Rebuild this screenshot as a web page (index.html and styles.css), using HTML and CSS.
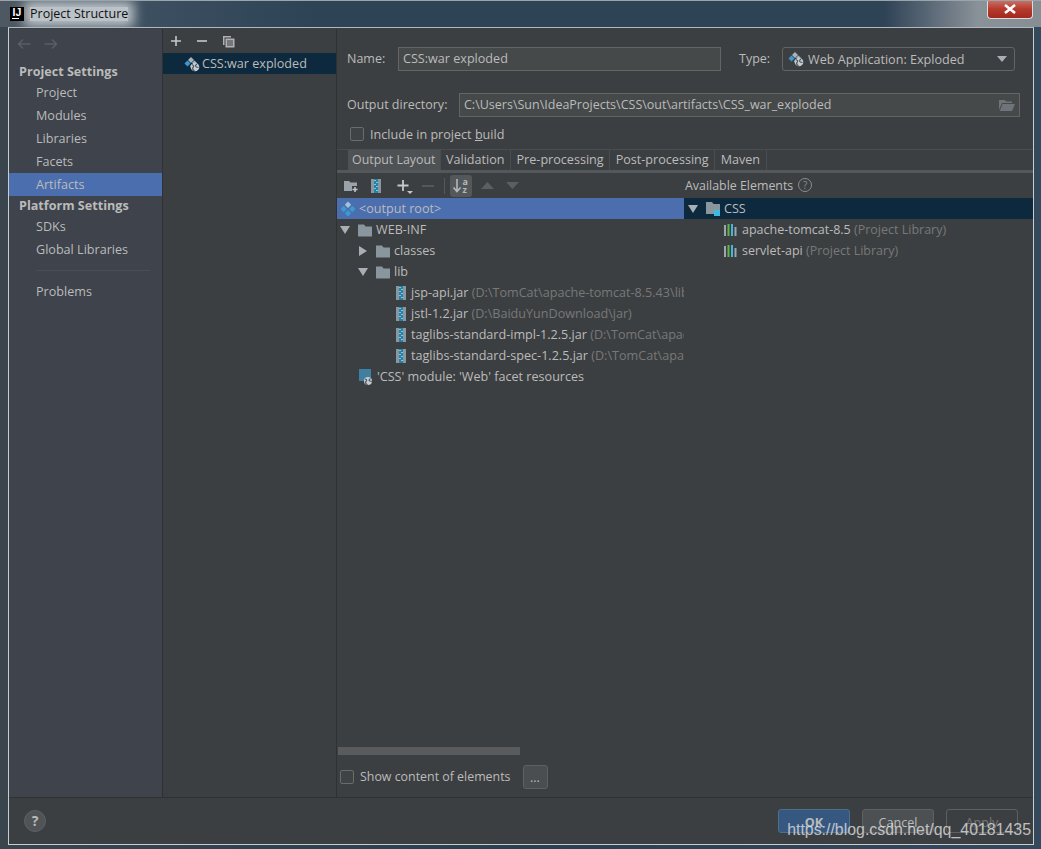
FILE: index.html
```html
<!DOCTYPE html>
<html lang="en">
<head>
    <meta charset="UTF-8">
    <meta name="viewport" content="width=device-width, initial-scale=1.0">
    <title>Project Structure</title>
    <link rel="stylesheet" href="styles.css">
</head>
<body>

    <!-- shared icons -->
    <svg class="defs" width="0" height="0">
        <symbol id="i-folder" viewBox="0 0 16 16">
            <path d="M1 2.500h6l1.500 2H15v10H1z" fill="#8a969e"/>
        </symbol>
        <symbol id="i-artifact" viewBox="0 0 16 16">
            <path d="M8 .5l3.200 3.200L8 6.900 4.800 3.700z" fill="#9fc3d8"/>
            <path d="M3.700 4.800l3.200 3.200-3.200 3.200L.5 8z M12.300 4.800L15.500 8l-3.200 3.200L9.100 8z M8 9.100l3.200 3.200L8 15.500l-3.200-3.200z" fill="#3d9ad1"/>
        </symbol>
        <symbol id="i-war" viewBox="0 0 16 16">
            <path d="M7 1l3 3-3 3-3-3z" fill="#a7b4bd"/>
            <path d="M3.500 4.500l3 3-3 3-3-3z" fill="#3d9ad1"/>
            <path d="M10.500 4.500l2.500 2.500-3 1-2-1.500z" fill="#a7b4bd"/>
            <path d="M6 10l2-2 1 1-2 3z" fill="#a7b4bd"/>
            <circle cx="11" cy="11" r="4.300" fill="#c5ccd1"/>
            <path d="M8 8.500c2 1 2 2 1 3s0 2.500 1.500 3.500M13 8c-1.500 1-2 2-.5 3l2 .5" fill="none" stroke="#46525c" stroke-width="1.200"/>
        </symbol>
        <symbol id="i-jar" viewBox="0 0 16 16">
            <rect x="3" y="1" width="10" height="14" fill="#8b979f"/>
            <rect x="6" y="1" width="4" height="14" fill="#2a7fa6"/>
            <path d="M6 2.500h2M8 4.500h2M6 6.500h2M8 8.500h2M6 10.500h2M8 12.500h2" stroke="#6fd0e6"/>
        </symbol>
        <symbol id="i-lib" viewBox="0 0 16 16">
            <path d="M1 3h2v11H1z" fill="#9aa7b0"/>
            <path d="M4.500 2h2v12h-2z" fill="#62b543"/>
            <path d="M8 2h2v12H8z" fill="#40b6e0"/>
            <path d="M11.500 5h2v9h-2z" fill="#9aa7b0"/>
        </symbol>
        <symbol id="i-caret-down" viewBox="0 0 10 10">
            <path d="M0 1h10L5 9z" fill="#a9b0b5"/>
        </symbol>
        <symbol id="i-caret-right" viewBox="0 0 10 10">
            <path d="M1 0v10l8-5z" fill="#a9b0b5"/>
        </symbol>
    </svg>

    <div class="titlebar">
        <span class="app-logo">IJ</span>
        <span class="window-title">Project Structure</span>
        <span class="close-btn">
            <svg width="14" height="10" viewBox="0 0 14 10"><path d="M2 1l10 8M12 1L2 9" stroke="#fff" stroke-width="2.600"/></svg>
        </span>
    </div>

    <div class="dialog">
        <div class="dialog-main">

            <div class="sidebar">
                <div class="nav-arrows">
                    <svg width="14" height="12" viewBox="0 0 14 12"><path d="M13.500 6H1.500M6 1.500L1.500 6 6 10.500" fill="none" stroke="#5a5f63" stroke-width="1.600"/></svg>
                    <svg width="14" height="12" viewBox="0 0 14 12"><path d="M.5 6h12M8 1.500L12.500 6 8 10.500" fill="none" stroke="#5a5f63" stroke-width="1.600"/></svg>
                </div>
                <div class="side-title">Project Settings</div>
                <div class="side-item">Project</div>
                <div class="side-item">Modules</div>
                <div class="side-item">Libraries</div>
                <div class="side-item">Facets</div>
                <div class="side-item active">Artifacts</div>
                <div class="side-title second">Platform Settings</div>
                <div class="side-item">SDKs</div>
                <div class="side-item">Global Libraries</div>
                <div class="side-sep"></div>
                <div class="side-item">Problems</div>
            </div>

            <div class="artifact-list">
                <div class="list-tools">
                    <svg width="12" height="12" viewBox="0 0 12 12"><path d="M6 1v10M1 6h10" stroke="#c4c8ca" stroke-width="1.600"/></svg>
                    <svg width="12" height="12" viewBox="0 0 12 12"><path d="M1 6h10" stroke="#c4c8ca" stroke-width="1.600"/></svg>
                    <svg width="13" height="13" viewBox="0 0 13 13"><path d="M1 1h8v1.500H2.500V10H1z" fill="#afb1b3"/><path d="M3.500 3.500h9v9h-9z" fill="#afb1b3"/><path d="M5 6h6M5 8h6M5 10h6" stroke="#3c3f41"/></svg>
                </div>
                <div class="list-row">
                    <svg class="icon" width="16" height="16"><use href="#i-war"/></svg>
                    CSS:war exploded
                </div>
            </div>

            <div class="editor">
                <div class="form-row name-row">
                    <label class="form-label name-label">Name:</label>
                    <input class="text-input name-input" type="text" value="CSS:war exploded">
                    <label class="form-label type-label">Type:</label>
                    <div class="select-box">
                        <svg class="icon" width="16" height="16"><use href="#i-war"/></svg>
                        <span>Web Application: Exploded</span>
                        <svg class="select-caret" width="10" height="6" viewBox="0 0 10 6"><path d="M0 0h10L5 6z" fill="#a9b0b5"/></svg>
                    </div>
                </div>
                <div class="form-row dir-row">
                    <label class="form-label dir-label">Output directory:</label>
                    <div class="text-input dir-input">
                        <span>C:\Users\Sun\IdeaProjects\CSS\out\artifacts\CSS_war_exploded</span>
                        <svg width="16" height="12" viewBox="0 0 16 12"><path d="M0 1h6l1 1.500h6V4H3L0 11z" fill="#6e7479"/><path d="M3.500 5H16l-3 7H.8z" fill="#6e7479"/></svg>
                    </div>
                </div>
                <div class="check-row include-row">
                    <span class="checkbox"></span>
                    <span>Include in project <u>b</u>uild</span>
                </div>

                <div class="tabs">
                    <div class="tab selected">Output Layout</div>
                    <div class="tab">Validation</div>
                    <div class="tab">Pre-processing</div>
                    <div class="tab">Post-processing</div>
                    <div class="tab">Maven</div>
                </div>

                <div class="split">
                    <div class="layout-pane">
                        <div class="layout-tools">
                            <svg width="16" height="14" viewBox="0 0 16 14"><path d="M1 2h5l1.500 1.500H14V7H9v5H1z" fill="#9aa3a9"/><path d="M12 8v5M9.500 10.500h5" stroke="#c4c8ca" stroke-width="1.500"/></svg>
                            <svg class="tool-jar" width="16" height="16"><use href="#i-jar"/></svg>
                            <svg class="tool-add" width="18" height="16" viewBox="0 0 18 16"><path d="M7 2v11M1.500 7.500h11" stroke="#c4c8ca" stroke-width="1.800"/><path d="M11 13h6l-3 3z" fill="#c4c8ca"/></svg>
                            <svg class="tool-remove" width="12" height="12" viewBox="0 0 12 12"><path d="M0 6h12" stroke="#5a5f63" stroke-width="1.600"/></svg>
                            <span class="tool-sep"></span>
                            <span class="sort-tool">
                                <svg width="18" height="16" viewBox="0 0 18 16"><path d="M5 1v12M1.500 9.500L5 13.500l3.500-4" fill="none" stroke="#b4b8ba" stroke-width="1.600"/><text x="10.500" y="7" class="sort-letter">a</text><text x="10.500" y="15" class="sort-letter">z</text></svg>
                            </span>
                            <svg class="tool-up" width="13" height="7" viewBox="0 0 13 7"><path d="M0 7h13L6.500 0z" fill="#5a5f63"/></svg>
                            <svg class="tool-down" width="13" height="7" viewBox="0 0 13 7"><path d="M0 0h13L6.500 7z" fill="#5a5f63"/></svg>
                        </div>
                        <div class="tree">
                            <div class="tree-row root-row">
                                <svg class="icon" width="16" height="16"><use href="#i-artifact"/></svg>
                                <span>&lt;output root&gt;</span>
                            </div>
                            <div class="tree-row">
                                <svg class="caret" width="10" height="10"><use href="#i-caret-down"/></svg>
                                <svg class="icon" width="16" height="16"><use href="#i-folder"/></svg>
                                <span>WEB-INF</span>
                            </div>
                            <div class="tree-row level-1">
                                <svg class="caret" width="10" height="10"><use href="#i-caret-right"/></svg>
                                <svg class="icon" width="16" height="16"><use href="#i-folder"/></svg>
                                <span>classes</span>
                            </div>
                            <div class="tree-row level-1">
                                <svg class="caret" width="10" height="10"><use href="#i-caret-down"/></svg>
                                <svg class="icon" width="16" height="16"><use href="#i-folder"/></svg>
                                <span>lib</span>
                            </div>
                            <div class="tree-row level-2">
                                <svg class="icon" width="16" height="16"><use href="#i-jar"/></svg>
                                <span>jsp-api.jar <em>(D:\TomCat\apache-tomcat-8.5.43\lib)</em></span>
                            </div>
                            <div class="tree-row level-2">
                                <svg class="icon" width="16" height="16"><use href="#i-jar"/></svg>
                                <span>jstl-1.2.jar <em>(D:\BaiduYunDownload\jar)</em></span>
                            </div>
                            <div class="tree-row level-2">
                                <svg class="icon" width="16" height="16"><use href="#i-jar"/></svg>
                                <span>taglibs-standard-impl-1.2.5.jar <em>(D:\TomCat\apache-tomcat-8.5.43\lib)</em></span>
                            </div>
                            <div class="tree-row level-2">
                                <svg class="icon" width="16" height="16"><use href="#i-jar"/></svg>
                                <span>taglibs-standard-spec-1.2.5.jar <em>(D:\TomCat\apache-tomcat-8.5.43\lib)</em></span>
                            </div>
                            <div class="tree-row module-row">
                                <svg class="icon" width="16" height="16" viewBox="0 0 16 16"><rect x="1" y="0" width="12" height="12" fill="#3f7f9f"/><circle cx="10" cy="12" r="4" fill="#c5ccd1"/><path d="M7 10c2 .5 2 1.500 1 2.500s0 2.500 1.500 3.500M12.500 9.500c-1.500 1-2 2-.5 2.500l2 .5" fill="none" stroke="#46525c" stroke-width="1.100"/></svg>
                                <span>'CSS' module: 'Web' facet resources</span>
                            </div>
                        </div>
                    </div>

                    <div class="elements-pane">
                        <div class="elements-head">
                            Available Elements
                            <span class="hint">?</span>
                        </div>
                        <div class="tree-row module-select">
                            <svg class="caret" width="10" height="10"><use href="#i-caret-down"/></svg>
                            <svg class="icon" width="16" height="16" viewBox="0 0 16 16"><path d="M1 1h6l1.500 2H15v10H1z" fill="#8a969e"/><rect x="9" y="9" width="6" height="6" fill="#40b6e0"/></svg>
                            <span>CSS</span>
                        </div>
                        <div class="tree-row elem-lib">
                            <svg class="icon" width="16" height="16"><use href="#i-lib"/></svg>
                            <span>apache-tomcat-8.5 <em>(Project Library)</em></span>
                        </div>
                        <div class="tree-row elem-lib">
                            <svg class="icon" width="16" height="16"><use href="#i-lib"/></svg>
                            <span>servlet-api <em>(Project Library)</em></span>
                        </div>
                    </div>
                </div>

                <div class="scroll-track"><div class="scroll-thumb"></div></div>
                <div class="check-row show-row">
                    <span class="checkbox"></span>
                    <span>Show content of elements</span>
                    <span class="dots-btn">...</span>
                </div>
            </div>
        </div>

        <div class="footer">
            <span class="help-btn">?</span>
            <div class="footer-buttons">
                <span class="btn btn-ok">OK</span>
                <span class="btn btn-cancel">Cancel</span>
                <span class="btn btn-apply">Apply</span>
            </div>
        </div>
    </div>

    <div class="watermark">https://blog.csdn.net/qq_40181435</div>

</body>
</html>
```

FILE: styles.css
```css
* {
    box-sizing: border-box;
}

html, body {
    margin: 0;
    padding: 0;
}

body {
    position: relative;
    width: 1041px;
    height: 849px;
    overflow: hidden;
    font-family: "Open Sans", "Noto Sans", sans-serif;
    font-size: 12.6px;
    color: #bbbbbb;
    background: linear-gradient(90deg, #39444d 0, #2c3f50 50%, #34495c 100%);
}

.defs {
    position: absolute;
}

.icon, .caret {
    flex: none;
}

em {
    font-style: normal;
    color: #787878;
}

/* window title */
.titlebar {
    height: 27px;
    display: flex;
    align-items: center;
    padding-left: 10px;
    color: #111;
    overflow: hidden;
    background: linear-gradient(90deg, #4d5862 0, #3b4f60 15%, #2f4357 30%, #2f4357 85%, #8a9299 94%, #868d93 100%);
    border-top: 1px solid #9aa4ab;
}

.app-logo {
    width: 14px;
    height: 14px;
    margin-right: 6px;
    position: relative;
    z-index: 1;
    background: linear-gradient(#fff, #fff) 2px 11px / 7px 1px no-repeat, #000;
    color: #fff;
    font-family: "Liberation Sans", sans-serif;
    font-size: 10.500px;
    font-weight: bold;
    line-height: 11px;
    text-align: center;
}

.window-title {
    height: 14px;
    line-height: 14px;
    font-size: 12.500px;
    background: #bcc3c8;
    box-shadow: 0 0 12px 6px #bcc3c8;
}

.close-btn {
    margin: -9px 8px 0 auto;
    width: 46px;
    height: 19px;
    display: flex;
    align-items: center;
    justify-content: center;
    border: 1px solid #d9dcde;
    border-top: 0;
    border-radius: 0 0 4px 4px;
    background: linear-gradient(#c9756a 0, #b73a2d 50%, #a3281e 100%);
}

/* dialog */
.dialog {
    margin: 0 7px 0 8px;
    height: 818px;
    background: #3c3f41;
    border: 1px solid #c5ced4;
    border-top-color: #aeb8bf;
    display: flex;
    flex-direction: column;
}

.dialog-main {
    height: 769px;
    display: flex;
    border-bottom: 1px solid #2f3133;
    margin-top: 1px;
}

/* left nav */
.sidebar {
    width: 154px;
    flex: none;
    background: #3e434c;
    border-right: 1px solid #2f3133;
}

.nav-arrows {
    height: 32px;
    padding: 9px 0 0 8px;
    display: flex;
    gap: 13px;
}

.side-title {
    height: 20px;
    padding-left: 10px;
    font-weight: bold;
    line-height: 22px;
}

.side-title.second {
    height: 19px;
    line-height: 19px;
}

.side-item {
    height: 23px;
    padding-left: 27px;
    line-height: 23px;
}

.side-item.active {
    background: #4b6eaf;
}

.side-sep {
    height: 1px;
    margin: 9px 12px 9px 27px;
    background: #4a4e55;
}

/* artifact list */
.artifact-list {
    width: 174px;
    flex: none;
    border-right: 1px solid #2f3133;
}

.list-tools {
    height: 24px;
    padding: 0 0 0 7px;
    display: flex;
    align-items: center;
    gap: 14px;
}

.list-row {
    height: 21px;
    padding-left: 21px;
    display: flex;
    align-items: center;
    gap: 2px;
    background: #0d293e;
}

/* form on the right */
.editor {
    flex: 1;
    min-width: 0;
    display: flex;
    flex-direction: column;
}

.form-row {
    display: flex;
    align-items: center;
}

.name-row {
    padding: 18px 18px 0 10px;
}

.form-label {
    flex: none;
    margin-bottom: 2px;
    font-size: 12.500px;
}

.name-label {
    width: 51px;
}

.type-label {
    width: 43px;
    margin-left: 18px;
}

.text-input {
    height: 24px;
    padding: 0 4px 1px;
    border: 1px solid #646464;
    background: #45494a;
    color: #bbbbbb;
    font: inherit;
}

.name-input {
    width: 323px;
    flex: none;
}

.select-box {
    width: 233px;
    height: 24px;
    flex: none;
    padding: 0 7px 0 5px;
    display: flex;
    align-items: center;
    gap: 4px;
    border: 1px solid #646464;
    border-radius: 3px;
    background: #3c3f41;
}

.select-caret {
    margin-left: auto;
}

.dir-row {
    padding: 22px 13px 0 10px;
}

.dir-label {
    width: 112px;
}

.dir-input {
    flex: 1;
    display: flex;
    align-items: center;
    justify-content: space-between;
    font-size: 12.500px;
}

.check-row {
    display: flex;
    align-items: center;
}

.checkbox {
    width: 14px;
    height: 14px;
    flex: none;
    border: 1px solid #6b6b6b;
    border-radius: 2px;
    background: #3f4345;
}

.include-row {
    padding: 2px 0 0 13px;
    gap: 6px;
    height: 32px;
}

/* tabs */
.tabs {
    height: 24px;
    display: flex;
    padding-left: 11px;
    border-top: 1px solid #4a4d4f;
    border-bottom: 3px solid #55585a;
}

.tab {
    padding: 0 5.500px;
    line-height: 20px;
    border-right: 1px solid #4a4d4f;
}

.tab.selected {
    background: #4e5254;
    padding: 0 4px;
    font-size: 12.400px;
}

.split {
    flex: 1;
    display: flex;
    min-height: 0;
}

.layout-pane {
    width: 347px;
    flex: none;
    overflow: hidden;
}

.layout-tools {
    height: 25px;
    padding-left: 6px;
    display: flex;
    align-items: center;
}

.tool-jar {
    margin-left: 9px;
}

.tool-add {
    margin-left: 12px;
}

.tool-remove {
    margin-left: 8px;
}

.tool-sep {
    width: 1px;
    height: 16px;
    margin-left: 10px;
    background: #55585a;
}

.sort-tool {
    width: 22px;
    height: 22px;
    margin-left: 5px;
    display: flex;
    align-items: center;
    justify-content: center;
    border-radius: 3px;
    background: #55585a;
}

.sort-letter {
    font-size: 9px;
    fill: #b4b8ba;
    font-weight: bold;
}

.tool-up {
    margin-left: 9px;
}

.tool-down {
    margin-left: 12px;
}

.tree-row {
    height: 21px;
    display: flex;
    align-items: center;
    white-space: nowrap;
    padding-left: 3px;
    gap: 2px;
}

.tree-row .icon {
    margin-right: 1px;
}

.tree-row .caret {
    margin-right: 5px;
}

.root-row {
    background: #4b6eaf;
}

.level-1 {
    padding-left: 21px;
}

.level-2 {
    padding-left: 56px;
    gap: 1px;
}

.module-row {
    padding-left: 21px;
}

/* available elements */
.elements-pane {
    flex: 1;
    min-width: 0;
}

.elements-head {
    height: 24px;
    padding-left: 1px;
    margin-bottom: 1px;
    display: flex;
    align-items: center;
    gap: 5px;
    font-size: 12.400px;
}

.hint {
    width: 14px;
    height: 14px;
    border: 1px solid #8a8d8f;
    border-radius: 50%;
    font-size: 10px;
    line-height: 12px;
    text-align: center;
    color: #8a8d8f;
}

.module-select {
    padding-left: 4px;
    background: #0d293e;
}

.elem-lib {
    padding-left: 39px;
    font-size: 12.500px;
}

.scroll-track {
    height: 8px;
    margin: 0 0 0 1px;
}

.scroll-thumb {
    width: 182px;
    height: 8px;
    background: #595b5d;
}

.show-row {
    height: 42px;
    padding: 1px 0 0 3px;
    gap: 6px;
    font-size: 12.400px;
}

.dots-btn {
    width: 25px;
    height: 24px;
    margin-left: 6px;
    border: 1px solid #5e6163;
    border-radius: 3px;
    background: #4a4e50;
    text-align: center;
    line-height: 24px;
}

/* footer */
.footer {
    flex: 1;
    display: flex;
    align-items: center;
    justify-content: space-between;
    padding: 0 15px 0 15px;
}

.help-btn {
    width: 22px;
    height: 22px;
    border-radius: 50%;
    background: #505456;
    border: 1px solid #5e6163;
    font-weight: bold;
    font-size: 14px;
    line-height: 20px;
    text-align: center;
}

.footer-buttons {
    display: flex;
    gap: 12px;
}

.btn {
    width: 72px;
    height: 24px;
    border-radius: 3px;
    border: 1px solid #5e6163;
    line-height: 25px;
    text-align: center;
}

.btn-ok {
    background: #365880;
    border-color: #4c708c;
    font-weight: bold;
}

.btn-cancel {
    background: #4c5052;
}

.btn-apply {
    border-color: #5e6163;
    color: #777;
}

.watermark {
    position: absolute;
    right: 10px;
    bottom: 10px;
    font-family: "Liberation Sans", sans-serif;
    font-size: 15.900px;
    color: rgba(225, 225, 225, 0.8);
}
```
